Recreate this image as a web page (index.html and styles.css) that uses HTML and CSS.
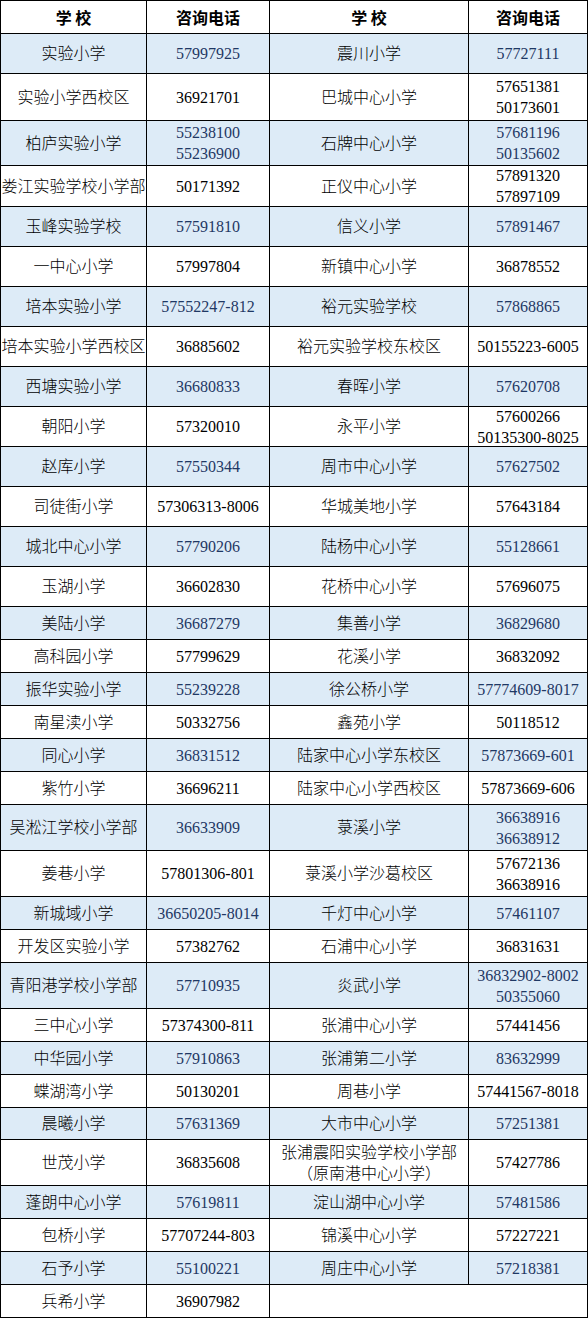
FILE: index.html
```html
<!DOCTYPE html>
<html lang="zh-CN">
<head>
<meta charset="utf-8">
<title>学校咨询电话</title>
<link rel="stylesheet" href="styles.css">
</head>
<body>
<table class="sheet">
<colgroup><col class="c1"><col class="c2"><col class="c3"><col class="c4"></colgroup>
<thead>
<tr class="h33 head"><th>学 校</th><th>咨询电话</th><th>学 校</th><th>咨询电话</th></tr>
</thead>
<tbody>
<tr class="h40 blue"><td>实验小学</td><td class="ph">57997925</td><td>震川小学</td><td class="ph">57727111</td></tr>
<tr class="h47"><td>实验小学西校区</td><td class="ph">36921701</td><td>巴城中心小学</td><td class="ph">57651381<br>50173601</td></tr>
<tr class="h45 blue"><td>柏庐实验小学</td><td class="ph">55238100<br>55236900</td><td>石牌中心小学</td><td class="ph">57681196<br>50135602</td></tr>
<tr class="h41"><td>娄江实验学校小学部</td><td class="ph">50171392</td><td>正仪中心小学</td><td class="ph"><div class="tight">57891320<br>57897109</div></td></tr>
<tr class="h40 blue"><td>玉峰实验学校</td><td class="ph">57591810</td><td>信义小学</td><td class="ph">57891467</td></tr>
<tr class="h40"><td>一中心小学</td><td class="ph">57997804</td><td>新镇中心小学</td><td class="ph">36878552</td></tr>
<tr class="h40 blue"><td>培本实验小学</td><td class="ph">57552247-812</td><td>裕元实验学校</td><td class="ph">57868865</td></tr>
<tr class="h40"><td>培本实验小学西校区</td><td class="ph">36885602</td><td>裕元实验学校东校区</td><td class="ph">50155223-6005</td></tr>
<tr class="h40 blue"><td>西塘实验小学</td><td class="ph">36680833</td><td>春晖小学</td><td class="ph">57620708</td></tr>
<tr class="h40"><td>朝阳小学</td><td class="ph">57320010</td><td>永平小学</td><td class="ph"><div class="tight">57600266<br>50135300-8025</div></td></tr>
<tr class="h40 blue"><td>赵库小学</td><td class="ph">57550344</td><td>周市中心小学</td><td class="ph">57627502</td></tr>
<tr class="h40"><td>司徒街小学</td><td class="ph">57306313-8006</td><td>华城美地小学</td><td class="ph">57643184</td></tr>
<tr class="h40 blue"><td>城北中心小学</td><td class="ph">57790206</td><td>陆杨中心小学</td><td class="ph">55128661</td></tr>
<tr class="h40"><td>玉湖小学</td><td class="ph">36602830</td><td>花桥中心小学</td><td class="ph">57696075</td></tr>
<tr class="h33 blue"><td>美陆小学</td><td class="ph">36687279</td><td>集善小学</td><td class="ph">36829680</td></tr>
<tr class="h33"><td>高科园小学</td><td class="ph">57799629</td><td>花溪小学</td><td class="ph">36832092</td></tr>
<tr class="h33 blue"><td>振华实验小学</td><td class="ph">55239228</td><td>徐公桥小学</td><td class="ph">57774609-8017</td></tr>
<tr class="h33"><td>南星渎小学</td><td class="ph">50332756</td><td>鑫苑小学</td><td class="ph">50118512</td></tr>
<tr class="h33 blue"><td>同心小学</td><td class="ph">36831512</td><td>陆家中心小学东校区</td><td class="ph">57873669-601</td></tr>
<tr class="h33"><td>紫竹小学</td><td class="ph">36696211</td><td>陆家中心小学西校区</td><td class="ph">57873669-606</td></tr>
<tr class="h46 blue"><td>吴淞江学校小学部</td><td class="ph">36633909</td><td>菉溪小学</td><td class="ph">36638916<br>36638912</td></tr>
<tr class="h46"><td>姜巷小学</td><td class="ph">57801306-801</td><td>菉溪小学沙葛校区</td><td class="ph">57672136<br>36638916</td></tr>
<tr class="h33 blue"><td>新城域小学</td><td class="ph">36650205-8014</td><td>千灯中心小学</td><td class="ph">57461107</td></tr>
<tr class="h33"><td>开发区实验小学</td><td class="ph">57382762</td><td>石浦中心小学</td><td class="ph">36831631</td></tr>
<tr class="h46 blue"><td>青阳港学校小学部</td><td class="ph">57710935</td><td>炎武小学</td><td class="ph">36832902-8002<br>50355060</td></tr>
<tr class="h33"><td>三中心小学</td><td class="ph">57374300-811</td><td>张浦中心小学</td><td class="ph">57441456</td></tr>
<tr class="h33 blue"><td>中华园小学</td><td class="ph">57910863</td><td>张浦第二小学</td><td class="ph">83632999</td></tr>
<tr class="h33"><td>蝶湖湾小学</td><td class="ph">50130201</td><td>周巷小学</td><td class="ph">57441567-8018</td></tr>
<tr class="h32 blue"><td>晨曦小学</td><td class="ph">57631369</td><td>大市中心小学</td><td class="ph">57251381</td></tr>
<tr class="h46"><td>世茂小学</td><td class="ph">36835608</td><td class="wide">张浦震阳实验学校小学部<br>（原南港中心小学）</td><td class="ph">57427786</td></tr>
<tr class="h33 blue"><td>蓬朗中心小学</td><td class="ph">57619811</td><td>淀山湖中心小学</td><td class="ph">57481586</td></tr>
<tr class="h33"><td>包桥小学</td><td class="ph">57707244-803</td><td>锦溪中心小学</td><td class="ph">57227221</td></tr>
<tr class="h33 blue"><td>石予小学</td><td class="ph">55100221</td><td>周庄中心小学</td><td class="ph">57218381</td></tr>
<tr class="h33"><td>兵希小学</td><td class="ph">36907982</td><td colspan="2"></td></tr>
</tbody>
</table>
</body>
</html>
```
FILE: styles.css
```css
html, body {
  margin: 0;
  padding: 0;
  background: #ffffff;
}

.sheet {
  border-collapse: collapse;
  table-layout: fixed;
  width: 588px;
  font-family: "Liberation Serif", "Noto Sans CJK SC", serif;
  font-size: 16px;
  color: #000000;
}

.c1 { width: 146px; }
.c2 { width: 123px; }
.c3 { width: 199px; }
.c4 { width: 119px; }

.sheet th,
.sheet td {
  border: 1px solid #000000;
  padding: 0;
  text-align: center;
  vertical-align: middle;
  line-height: 21px;
  white-space: nowrap;
  overflow: visible;
  font-weight: 400;
}

.sheet td {
  font-weight: 300;
}

.sheet .ph {
  font-weight: 400;
}

.tight {
  line-height: 21px;
  margin: -3px 0;
}

.head th {
  font-family: "Noto Sans CJK SC", sans-serif;
  font-weight: 700;
  font-size: 16px;
  background: #ffffff;
}

.blue td {
  background: #ddebf7;
}

.blue .ph {
  color: #1f3864;
}

.wide {
  line-height: 22px;
}

.h32 { height: 32px; }
.h33 { height: 33px; }
.h40 { height: 40px; }
.h41 { height: 41px; }
.h45 { height: 45px; }
.h46 { height: 46px; }
.h47 { height: 47px; }
```
